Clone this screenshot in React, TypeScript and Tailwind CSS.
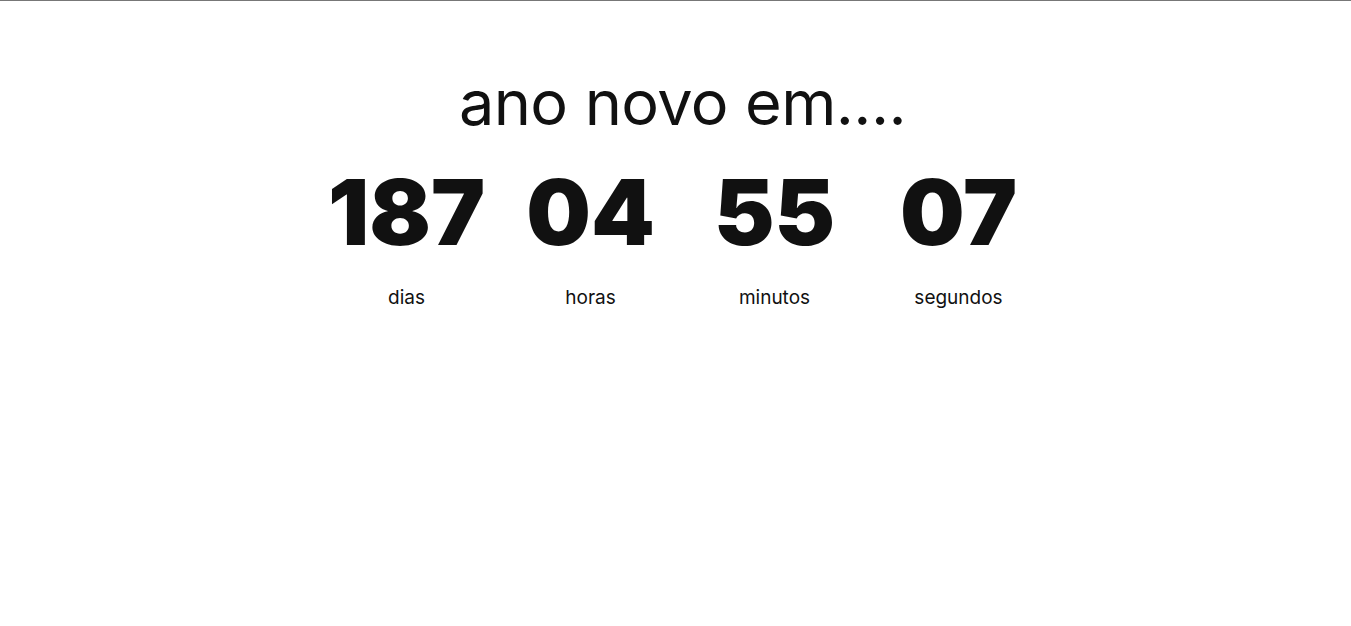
const units = [
  { value: "187", label: "dias" },
  { value: "04", label: "horas" },
  { value: "55", label: "minutos" },
  { value: "07", label: "segundos" },
];

export default function App() {
  return (
    <div className="min-h-[626px] w-full border-t border-[#777777] bg-white text-[#111111] font-['Inter',sans-serif]">
      <div className="flex flex-col items-center pt-[70px] pl-[14px]">
        <h1 className="text-[63px] font-normal leading-[1] tracking-[-0.6px]">ano novo em....</h1>
        <div className="mt-[33px] grid grid-cols-4">
          {units.map((u) => (
            <div key={u.label} className="flex w-[184px] flex-col items-center">
              <span className="text-[91px] font-black leading-[1] tracking-[0px]">{u.value}</span>
              <span className="mt-[30px] text-[19px] leading-[1]">{u.label}</span>
            </div>
          ))}
        </div>
      </div>
    </div>
  );
}
